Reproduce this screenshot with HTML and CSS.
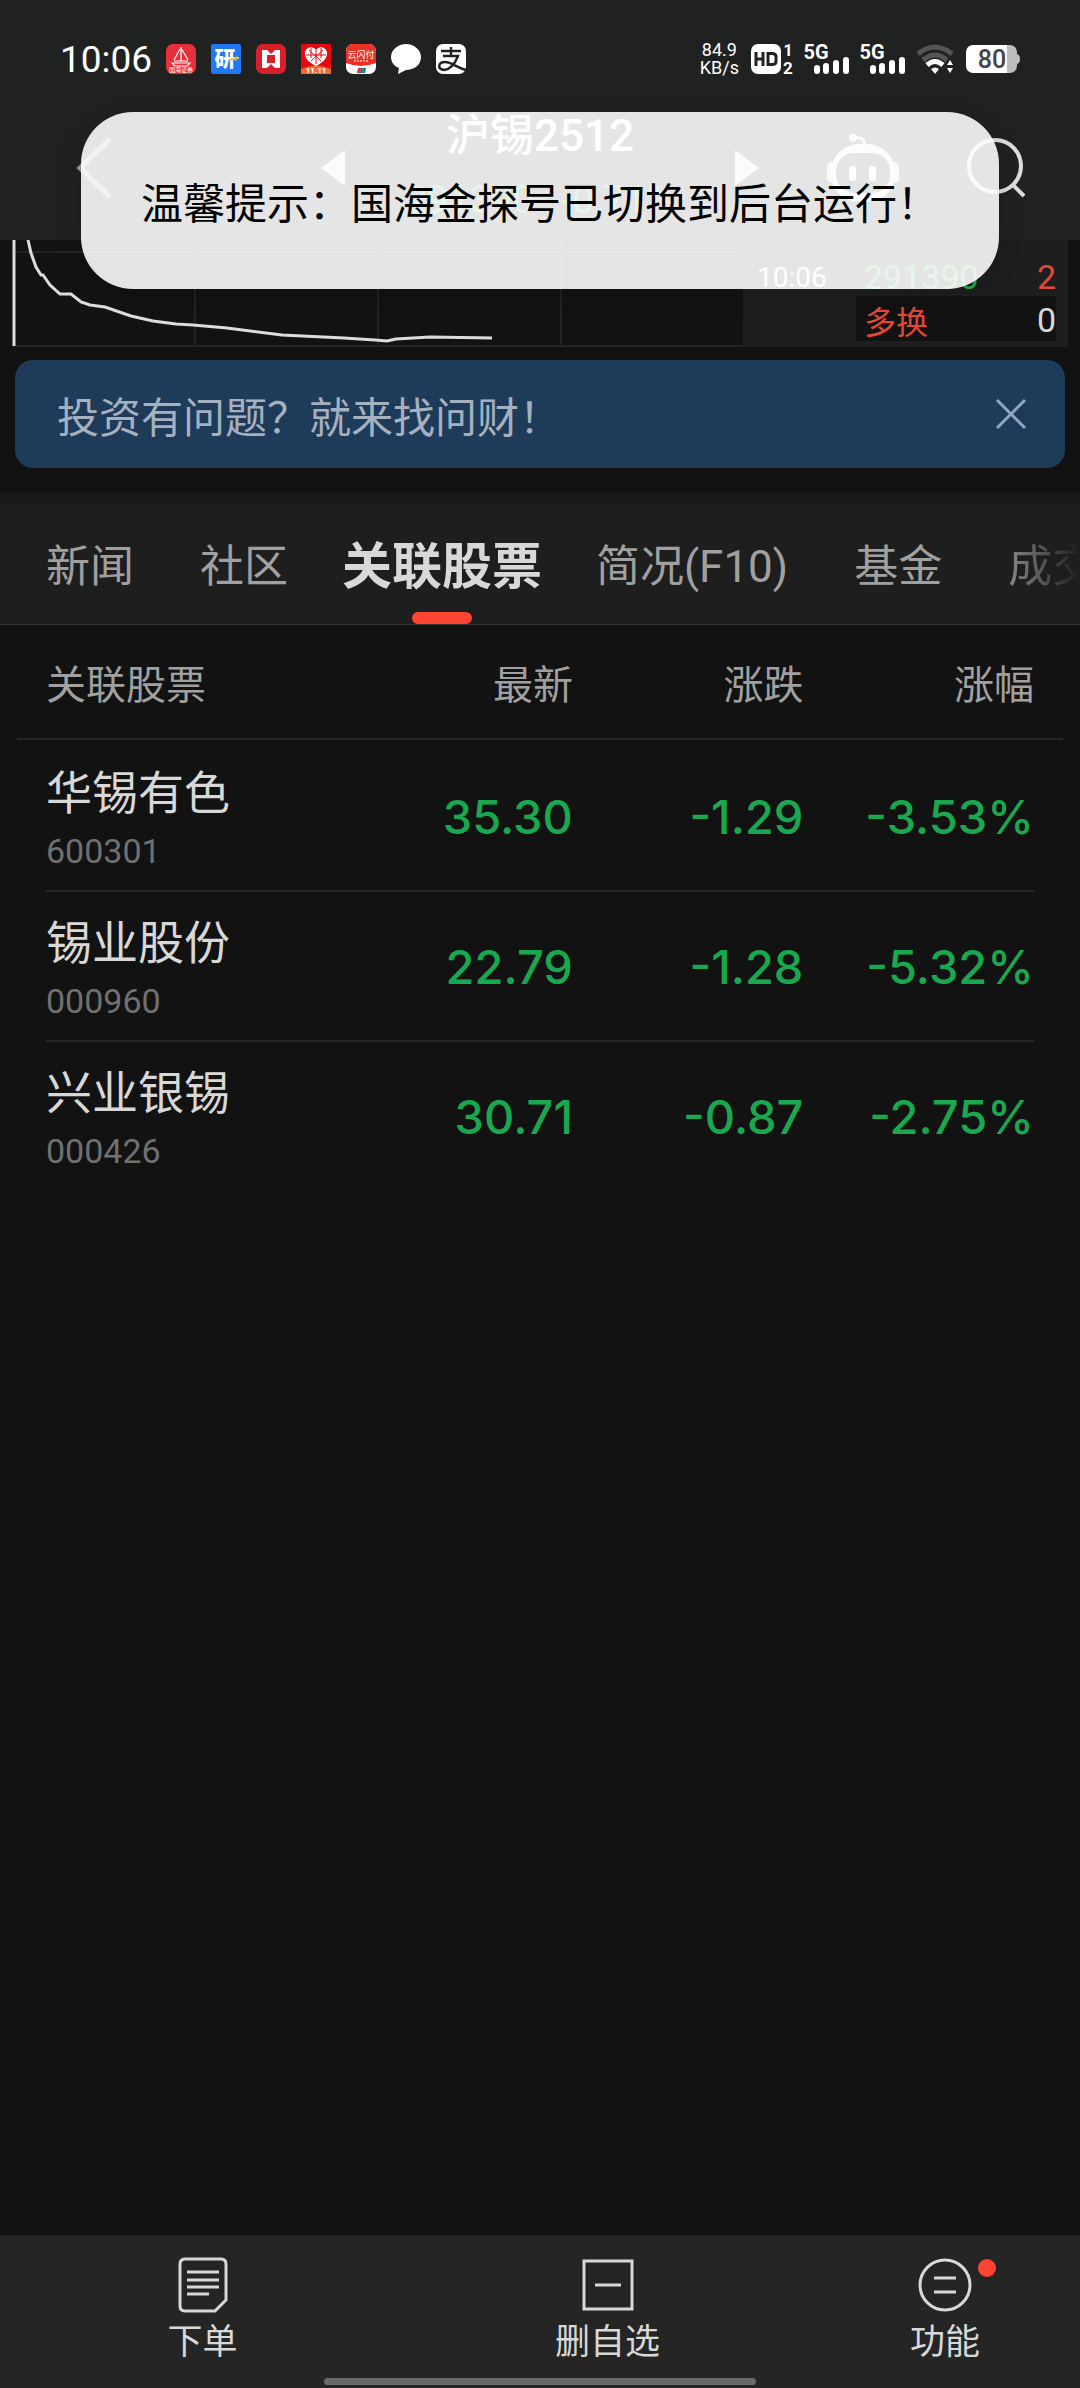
FILE: index.html
```html
<!DOCTYPE html>
<html lang="zh-CN">
<head>
    <meta charset="UTF-8">
    <meta name="viewport" content="width=device-width, initial-scale=1.0">
    <title>沪锡2512</title>
    <link rel="stylesheet" href="styles.css">
</head>
<body>
    <header class="top">
        <div class="status-bar">
            <span class="clock">10:06</span>
            <div class="app-icons">
                <svg viewBox="0 0 30 30">
                    <rect width="30" height="30" rx="7" fill="#e8303a"/>
                    <path d="M15 3v14M14 5L8 16M15 4l7 12M8 17h14M6 19h18l-3 3H9z" fill="none" stroke="#fff" stroke-width="1.2"/>
                    <text x="15" y="28" class="icon-text" font-size="6">国海证券</text>
                </svg>
                <svg viewBox="0 0 30 30">
                    <rect width="30" height="30" rx="2" fill="#2277f4"/>
                    <text x="14" y="22" class="icon-text" font-size="21" font-weight="900">研</text>
                    <path d="M18 15l7-2v-2l1 2h2v2h-2l-1 2-1-1-6 1z" fill="#d9c25a"/>
                </svg>
                <svg viewBox="0 0 30 30">
                    <rect width="30" height="30" rx="7" fill="#d8202a"/>
                    <path d="M6 6h5l4 4 4-4h5v18h-5l-4-4-4 4H6zM11 11v8h8v-8z" fill="#fff" fill-rule="evenodd"/>
                </svg>
                <svg viewBox="0 0 30 30">
                    <rect width="30" height="30" rx="1" fill="#e50914"/>
                    <path d="M0 25Q15 18 30 25v5H0z" fill="#f06a35"/>
                    <path d="M15 22C7 18 3 13 4 8c2-6 8-6 11-2 3-4 9-4 11 2 1 5-3 10-11 14z" fill="#fff"/>
                    <path d="M8 6l12 11M22 6L10 17M5 11h20M15 6v14M10 4v10M20 4v10" stroke="#e50914" stroke-width="1"/>
                    <text x="15" y="29" class="icon-text" font-size="8" font-weight="700">11.11</text>
                </svg>
                <svg viewBox="0 0 30 30">
                    <rect width="30" height="30" rx="7" fill="#fff"/>
                    <path d="M0 19V7a7 7 0 0 1 7-7h16a7 7 0 0 1 7 7v12Q15 25 0 19z" fill="#ee3024"/>
                    <text x="15" y="14" class="icon-text" font-size="9">云闪付</text>
                    <path d="M8 17h14" stroke="#fff" stroke-dasharray="2 1"/>
                    <path d="M12 24h3l-1 5h-3z" fill="#d33"/>
                    <path d="M15 24h2l-1 5h-2z" fill="#235a8c"/>
                    <path d="M17 24h3l-1 5h-3z" fill="#17827b"/>
                </svg>
                <svg viewBox="0 0 30 30">
                    <path d="M15 0c8 0 15 6 15 13 0 8-7 13-15 13l-8 4 1-6C3 22 0 18 0 13 0 6 7 0 15 0z" fill="#fff"/>
                </svg>
                <svg viewBox="0 0 30 30">
                    <rect width="30" height="30" rx="7" fill="#fff"/>
                    <path d="M15 3v9M5 7h20M7 12h15Q17 25 8 26c-7-1-6-8 1-8 7 0 12 6 21 8" fill="none" stroke="#202121" stroke-width="2.4"/>
                </svg>
            </div>
            <div class="signals">
                <div class="net-speed"><span>84.9</span><span>KB/s</span></div>
                <svg class="hd" viewBox="0 0 42 30">
                    <rect width="30" height="30" rx="7" fill="#fff"/>
                    <path d="M5 8v14M12 8v14M5 15h7M17 9.500h4q4 0 4 3v5q0 3-4 3h-4z" fill="none" stroke="#202121" stroke-width="3"/>
                    <text x="37" y="12" class="icon-text" font-size="16" font-weight="700">1</text>
                    <text x="37" y="30" class="icon-text" font-size="17" font-weight="700">2</text>
                </svg>
                <svg class="cell" viewBox="0 0 44 30">
                    <text x="11" y="15" class="icon-text" font-size="20" font-weight="700">5G</text>
                    <path d="M12 24v3M21 22v5M31 19v8M41 16v11" stroke="#fff" stroke-width="6" stroke-linecap="round"/>
                </svg>
                <svg class="cell" viewBox="0 0 44 30">
                    <text x="11" y="15" class="icon-text" font-size="20" font-weight="700">5G</text>
                    <path d="M12 24v3M21 22v5M31 19v8M41 16v11" stroke="#fff" stroke-width="6" stroke-linecap="round"/>
                </svg>
                <svg class="wifi" viewBox="0 0 37 30">
                    <g fill="none" stroke-width="5">
                        <path d="M1 10q17-14 34 0" stroke="#555"/>
                        <path d="M6 16q12-10 24 0" stroke="#555"/>
                        <path d="M10 21q8-7 16 0" stroke="#fff"/>
                    </g>
                    <path d="M14 25q4-3 8 0l-4 5zM30 21l3-5 3 5zM30 24h6l-3 5z" fill="#fff"/>
                </svg>
                <svg class="battery" viewBox="0 0 54 28">
                    <path d="M40 0h4a7 7 0 0 1 7 7v2q3 1 3 5t-3 5v2a7 7 0 0 1-7 7h-4z" fill="#bcbdbd"/>
                    <path d="M41 0H7a7 7 0 0 0-7 7v14a7 7 0 0 0 7 7h34z" fill="#fff"/>
                    <text x="26" y="23" text-anchor="middle" fill="#444" font-size="25" font-weight="500">80</text>
                </svg>
            </div>
        </div>

        <nav class="nav-bar">
            <button class="icon-btn back" aria-label="返回">
                <svg width="36" height="64" viewBox="0 0 36 64"><path d="M34 3L4 32l30 29" fill="none" stroke="#999" stroke-width="5"/></svg>
            </button>
            <div class="contract">
                <button class="icon-btn" aria-label="上一个">
                    <svg width="24" height="36" viewBox="0 0 24 36"><path d="M24 0v36L0 18z" fill="#ddd"/></svg>
                </button>
                <div class="contract-name">
                    <h1>沪锡2512</h1>
                    <p class="down"><span>291390</span><span>-0.71%</span></p>
                </div>
                <button class="icon-btn" aria-label="下一个">
                    <svg width="24" height="36" viewBox="0 0 24 36"><path d="M0 0v36l24-18z" fill="#ddd"/></svg>
                </button>
            </div>
            <div class="nav-actions">
                <button class="icon-btn" aria-label="智能助手">
                    <svg width="74" height="70" viewBox="0 0 74 70">
                        <path d="M27 5q12-2 12 8" fill="none" stroke="#eee" stroke-width="3"/>
                        <circle cx="27" cy="5" r="4" fill="#eee"/>
                        <rect x="1" y="29" width="10" height="21" rx="5" fill="#dde"/>
                        <rect x="63" y="29" width="10" height="21" rx="5" fill="#dde"/>
                        <rect x="5" y="11" width="64" height="58" rx="28" fill="#eef"/>
                        <rect x="10" y="20" width="54" height="40" rx="18" fill="#223"/>
                        <rect x="23" y="33" width="7" height="15" rx="3" fill="#fff"/>
                        <rect x="43" y="33" width="7" height="15" rx="3" fill="#fff"/>
                    </svg>
                </button>
                <button class="icon-btn" aria-label="搜索">
                    <svg width="60" height="62" viewBox="0 0 60 62"><circle cx="29" cy="29" r="26" fill="none" stroke="#ddd" stroke-width="4"/><path d="M47 48l11 11" stroke="#ddd" stroke-width="4"/></svg>
                </button>
            </div>
        </nav>

        <div class="toast" role="status">温馨提示：国海金探号已切换到后台运行！</div>
    </header>

    <section class="quote">
        <svg class="chart" viewBox="0 0 743 107" preserveAspectRatio="none">
            <path d="M14 12H743M14 106H743M195 0v107M378 0v107M561 0v107" stroke="#232323" stroke-width="2"/>
            <path d="M14 0v106" stroke="#ddd" stroke-width="3"/>
            <polyline points="28,0 31,13 36,27 41,35 43,35 50,45 60,54 71,54 81,62 90,65 105,67 131,76 153,81 176,84 193,85 227,88 282,95 344,98 375,100 387,101 396,99 430,97 492,98" fill="none" stroke="#ddd" stroke-width="3"/>
        </svg>
        <div class="trades">
            <div class="trade"><span class="time">10:06</span><span class="price">291390</span><span class="vol up">2</span></div>
            <div class="trade current"><span class="up">多换</span><span>0</span></div>
        </div>
    </section>

    <div class="ask-banner">
        <a href="#ask">投资有问题？就来找问财！</a>
        <button class="icon-btn" aria-label="关闭">
            <svg width="32" height="32" viewBox="0 0 32 32"><path d="M2 2l28 28M30 2L2 30" stroke="#93a6bd" stroke-width="3"/></svg>
        </button>
    </div>

    <nav class="tabs">
        <a href="#news">新闻</a>
        <a href="#community">社区</a>
        <a href="#related" class="active">关联股票</a>
        <a href="#f10">简况(F10)</a>
        <a href="#fund">基金</a>
        <a href="#deals">成交</a>
    </nav>

    <main>
        <table class="stocks">
            <thead>
                <tr><th>关联股票</th><th>最新</th><th>涨跌</th><th>涨幅</th></tr>
            </thead>
            <tbody>
                <tr>
                    <td class="stock"><span class="name">华锡有色</span><span class="code">600301</span></td>
                    <td>35.30</td><td>-1.29</td><td>-3.53%</td>
                </tr>
                <tr>
                    <td class="stock"><span class="name">锡业股份</span><span class="code">000960</span></td>
                    <td>22.79</td><td>-1.28</td><td>-5.32%</td>
                </tr>
                <tr>
                    <td class="stock"><span class="name">兴业银锡</span><span class="code">000426</span></td>
                    <td>30.71</td><td>-0.87</td><td>-2.75%</td>
                </tr>
            </tbody>
        </table>
    </main>

    <footer class="bottom-bar">
        <button class="action">
            <svg viewBox="0 0 56 56">
                <path d="M10 2h36q5 0 5 5v36L40 54H10q-5 0-5-5V7q0-5 5-5z"/>
                <path d="M12 15h32M12 23h32M12 30h32M12 37h22"/>
            </svg>
            下单
        </button>
        <button class="action">
            <svg viewBox="0 0 56 56"><path d="M4 4h48v48H4zM15 28h26"/></svg>
            删自选
        </button>
        <button class="action narrow">
            <svg viewBox="0 0 56 56"><circle cx="28" cy="28" r="25"/><path d="M17 21h22M17 35h22"/></svg>
            功能
            <span class="dot"></span>
        </button>
        <span class="home-indicator"></span>
    </footer>
</body>
</html>
```
FILE: styles.css
```css
:root {
    --bg: #121212;
    --panel: #1e1e1e;
    --line: #262626;
    --text: #d8d8d8;
    --muted: #a0a0a0;
    --green: #19a850;
    --red: #e0493a;
}
* {
    margin: 0;
    padding: 0;
    box-sizing: border-box;
}
body {
    min-height: 100vh;
    display: flex;
    flex-direction: column;
    background: var(--bg);
    color: var(--text);
    font-family: Roboto, 'Noto Sans CJK SC', sans-serif;
}
a {
    color: inherit;
    text-decoration: none;
}
button {
    border: none;
    background: none;
    color: inherit;
    font: inherit;
    cursor: pointer;
}
svg {
    display: block;
    overflow: visible;
}
.icon-btn {
    display: flex;
}

/* Status bar and title */
.top {
    position: relative;
    background: #202121;
}
.status-bar {
    display: flex;
    align-items: center;
    height: 108px;
    padding: 10px 60px 0;
    color: #fff;
}
.clock {
    font-size: 37px;
    margin-right: 14px;
}
.app-icons {
    display: flex;
    gap: 15px;
}
.app-icons svg {
    width: 30px;
    height: 30px;
}
.icon-text {
    fill: #fff;
    text-anchor: middle;
}
.signals {
    display: flex;
    align-items: center;
    gap: 12px;
    margin-left: auto;
}
.net-speed {
    display: flex;
    flex-direction: column;
    align-items: center;
    font-size: 18px;
    line-height: 18px;
}
.hd {
    width: 42px;
    height: 30px;
}
.cell {
    width: 44px;
    height: 30px;
}
.wifi {
    width: 37px;
    height: 30px;
}
.battery {
    width: 54px;
    height: 28px;
}
.nav-bar {
    display: grid;
    grid-template-columns: 1fr 438px 1fr;
    align-items: center;
    height: 132px;
    padding: 0 54px 12px;
}
.back {
    padding-left: 22px;
}
.contract {
    display: flex;
    align-items: center;
    justify-content: space-between;
}
.contract-name {
    text-align: center;
}
.contract-name h1 {
    color: #fff;
    font-size: 44px;
    font-weight: 500;
    line-height: 56px;
    margin-bottom: 8px;
}
.down {
    display: flex;
    gap: 28px;
    color: var(--green);
    font-size: 38px;
    line-height: 56px;
}
.nav-actions {
    display: flex;
    align-items: center;
    justify-content: flex-end;
    gap: 66px;
}
.toast {
    position: absolute;
    top: 112px;
    left: 81px;
    right: 81px;
    z-index: 1;
    padding: 64px 0 56px;
    border-radius: 52px;
    background: rgba(255, 255, 255, 0.885);
    box-shadow: 0 4px 24px rgba(0, 0, 0, 0.15);
    color: #000;
    font-size: 42px;
    line-height: 57px;
    text-align: center;
    white-space: nowrap;
}

/* Chart and latest trades */
.quote {
    display: grid;
    grid-template-columns: minmax(0, 743fr) minmax(0, 325fr);
    height: 107px;
    padding-right: 12px;
}
.chart {
    width: 100%;
    height: 107px;
    overflow: hidden;
}
.trades {
    display: flex;
    flex-direction: column;
    padding: 8px 12px 6px 14px;
    background: var(--panel);
    font-size: 34px;
}
.trade {
    display: flex;
    align-items: center;
    height: 48px;
    padding-top: 10px;
}
.time {
    width: 107px;
    color: #fff;
    font-size: 28px;
}
.price {
    color: #2da84a;
}
.vol {
    margin-left: auto;
}
.up {
    color: var(--red);
}
.current {
    justify-content: space-between;
    height: 45px;
    margin-left: 99px;
    padding: 2px 0 0 8px;
    background: var(--bg);
}
.current .up {
    font-size: 32px;
}

.ask-banner {
    display: flex;
    align-items: center;
    justify-content: space-between;
    height: 108px;
    margin: 13px 15px 24px;
    padding: 0 38px 0 42px;
    border-radius: 18px;
    background: #1f3b5a;
    color: #a5b1bf;
    font-size: 42px;
}

/* Tabs */
.tabs {
    display: flex;
    align-items: center;
    gap: 66px;
    height: 133px;
    padding: 6px 0 0 46px;
    overflow: hidden;
    border-top: 12px solid #181818;
    border-bottom: 1px solid #333;
    background: var(--panel);
    color: var(--muted);
    font-size: 44px;
    line-height: 120px;
    white-space: nowrap;
}
.tabs .active {
    position: relative;
    margin: 0 -12px;
    color: var(--text);
    font-size: 50px;
    font-weight: 700;
}
.tabs .active::after {
    content: '';
    position: absolute;
    bottom: 3px;
    left: 50%;
    width: 60px;
    height: 12px;
    margin-left: -30px;
    border-radius: 6px;
    background: #ff4433;
}
.tabs a:last-child {
    background: linear-gradient(90deg, #888, var(--panel) 72px);
    background-clip: text;
    color: transparent;
}

/* Related stocks */
main {
    flex: 1;
}
.stocks,
.stocks thead,
.stocks tbody {
    display: block;
}
.stocks tr {
    display: grid;
    grid-template-columns: minmax(0, 9fr) repeat(3, minmax(0, 7fr));
    align-items: center;
    text-align: right;
}
.stocks thead tr {
    height: 115px;
    margin: 0 17px;
    padding: 0 29px;
    border-bottom: 2px solid var(--line);
}
.stocks th {
    color: var(--muted);
    font-size: 40px;
    font-weight: 400;
}
.stocks th:first-child,
.stocks .stock {
    text-align: left;
}
.stocks tbody tr {
    height: 150px;
    margin: 0 46px;
    padding-top: 2px;
}
.stocks tbody tr + tr {
    padding-top: 0;
    border-top: 2px solid var(--line);
}
.stocks td {
    color: var(--green);
    font-family: Inter, sans-serif;
    font-size: 47px;
    font-weight: 500;
}
.stocks .stock {
    display: flex;
    flex-direction: column;
    padding-top: 8px;
    font-family: inherit;
    font-weight: 400;
}
.name {
    color: var(--text);
    font-size: 46px;
    line-height: 62px;
}
.code {
    color: #707070;
    font-size: 34px;
    line-height: 54px;
}

/* Bottom bar */
.bottom-bar {
    position: relative;
    display: flex;
    height: 153px;
    background: #252525;
}
.action {
    position: relative;
    flex: 3;
    display: flex;
    flex-direction: column;
    align-items: center;
    padding-top: 22px;
    font-size: 35px;
    line-height: 60px;
}
.action.narrow {
    flex: 2;
}
.action svg {
    width: 56px;
    height: 56px;
    fill: none;
    stroke: var(--text);
    stroke-width: 3;
}
.dot {
    position: absolute;
    top: 24px;
    left: 50%;
    width: 18px;
    height: 18px;
    margin-left: 33px;
    border-radius: 50%;
    background: #ff4433;
}
.home-indicator {
    position: absolute;
    bottom: 3px;
    left: 30%;
    right: 30%;
    height: 7px;
    border-radius: 4px;
    background: #6a6a6a;
}
```
